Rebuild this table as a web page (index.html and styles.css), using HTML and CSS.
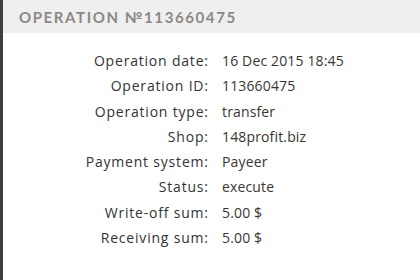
FILE: index.html
```html
<!DOCTYPE html>
<html>
<head>
<meta charset="utf-8">
<link rel="stylesheet" href="styles.css">
</head>
<body>
<div class="frame">
  <div class="strip"></div>
  <div class="panel">
    <div class="header"><span class="title">Operation №113660475</span></div>
    <div class="details">
      <div class="label">Operation date:</div><div class="value">16 Dec 2015 18:45</div>
      <div class="label">Operation ID:</div><div class="value">113660475</div>
      <div class="label">Operation type:</div><div class="value">transfer</div>
      <div class="label">Shop:</div><div class="value">148profit.biz</div>
      <div class="label">Payment system:</div><div class="value">Payeer</div>
      <div class="label">Status:</div><div class="value">execute</div>
      <div class="label">Write-off sum:</div><div class="value">5.00 $</div>
      <div class="label">Receiving sum:</div><div class="value">5.00 $</div>
    </div>
  </div>
</div>
</body>
</html>
```
FILE: styles.css
```css
html, body { margin: 0; padding: 0; background: #fff; }
.frame { display: flex; width: 420px; height: 280px; }
.strip { width: 3px; background: #3b4045; flex: none; }
.panel { flex: 1; display: flex; flex-direction: column; }
.header { height: 33px; background: #efefef; display: flex; align-items: center; padding-left: 16px; }
.title { font-family: "Lato", sans-serif; font-weight: 700; font-size: 15px; letter-spacing: 1.6px; text-transform: uppercase; color: #8b8985; }
.details { display: grid; grid-template-columns: 205px auto; column-gap: 14px; padding-top: 15px; font-family: "Open Sans", sans-serif; font-size: 14px; line-height: 25.3px; color: #333; }
.label { text-align: right; letter-spacing: 0.8px; margin-right: -0.8px; }
.value { color: #3a3530; letter-spacing: 0.15px; }
```
